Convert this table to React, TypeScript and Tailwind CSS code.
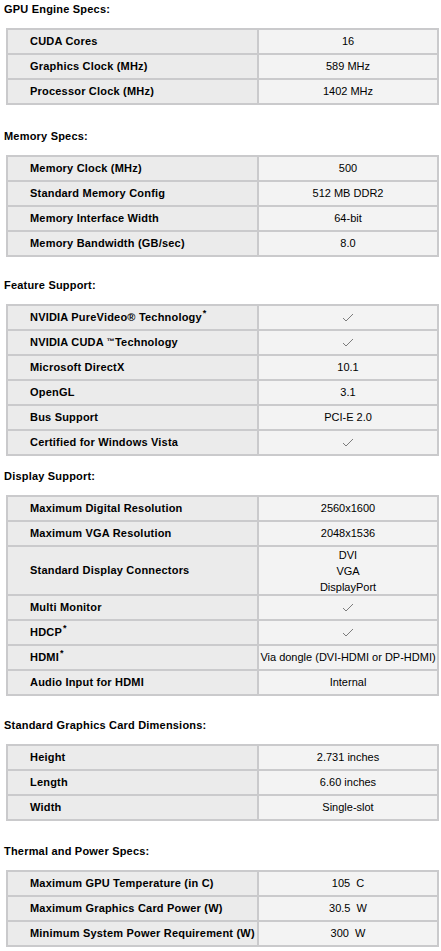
type Row = {
  label: React.ReactNode;
  value: React.ReactNode;
  tall?: boolean;
};

type Section = {
  title: string;
  gap: string;
  rows: Row[];
};

const Check = () => (
  <svg width="12" height="9" viewBox="0 0 12 9" className="block">
    <polyline points="1,5 4,8 11,1" fill="none" stroke="#7c7c7c" strokeWidth="1" />
  </svg>
);

const Star = () => <sup className="text-[9px] font-bold -top-[5px] ml-[1px]">*</sup>;

const sections: Section[] = [
  {
    title: "GPU Engine Specs:",
    gap: "pt-[3px]",
    rows: [
      { label: "CUDA Cores", value: "16" },
      { label: "Graphics Clock (MHz)", value: "589 MHz" },
      { label: "Processor Clock (MHz)", value: "1402 MHz" },
    ],
  },
  {
    title: "Memory Specs:",
    gap: "mt-[25px]",
    rows: [
      { label: "Memory Clock (MHz)", value: "500" },
      { label: "Standard Memory Config", value: "512 MB DDR2" },
      { label: "Memory Interface Width", value: "64-bit" },
      { label: "Memory Bandwidth (GB/sec)", value: "8.0" },
    ],
  },
  {
    title: "Feature Support:",
    gap: "mt-[22px]",
    rows: [
      {
        label: (
          <>
            NVIDIA PureVideo® Technology
            <Star />
          </>
        ),
        value: <Check />,
      },
      {
        label: (
          <>
            NVIDIA CUDA <span className="text-[8px] relative -top-[2px]">™</span>Technology
          </>
        ),
        value: <Check />,
      },
      { label: "Microsoft DirectX", value: "10.1" },
      { label: "OpenGL", value: "3.1" },
      { label: "Bus Support", value: "PCI-E 2.0" },
      { label: "Certified for Windows Vista", value: <Check /> },
    ],
  },
  {
    title: "Display Support:",
    gap: "mt-[14px]",
    rows: [
      { label: "Maximum Digital Resolution", value: "2560x1600" },
      { label: "Maximum VGA Resolution", value: "2048x1536" },
      {
        label: "Standard Display Connectors",
        tall: true,
        value: (
          <div className="flex flex-col items-center leading-[16px]">
            <span>DVI</span>
            <span>VGA</span>
            <span>DisplayPort</span>
          </div>
        ),
      },
      { label: "Multi Monitor", value: <Check /> },
      {
        label: (
          <>
            HDCP
            <Star />
          </>
        ),
        value: <Check />,
      },
      {
        label: (
          <>
            HDMI
            <Star />
          </>
        ),
        value: "Via dongle (DVI-HDMI or DP-HDMI)",
      },
      { label: "Audio Input for HDMI", value: "Internal" },
    ],
  },
  {
    title: "Standard Graphics Card Dimensions:",
    gap: "mt-[23px]",
    rows: [
      { label: "Height", value: "2.731 inches" },
      { label: "Length", value: "6.60 inches" },
      { label: "Width", value: "Single-slot" },
    ],
  },
  {
    title: "Thermal and Power Specs:",
    gap: "mt-[24px]",
    rows: [
      { label: "Maximum GPU Temperature (in C)", value: "105\u00a0 C" },
      { label: "Maximum Graphics Card Power (W)", value: "30.5\u00a0 W" },
      { label: "Minimum System Power Requirement (W)", value: "300\u00a0 W" },
    ],
  },
];

const SpecTable = ({ rows }: { rows: Row[] }) => (
  <div className="ml-[6px] w-[433px] grid grid-cols-[249px_178px] gap-[2px] p-[2px] bg-[#cacacc]">
    {rows.map((row, i) => (
      <div key={i} className="contents">
        <div
          className={`flex items-center pl-[22px] bg-[#ebebeb] font-bold tracking-[0.2px] whitespace-nowrap ${
            row.tall ? "h-[47px]" : "h-[23px]"
          }`}
        >
          <span>{row.label}</span>
        </div>
        <div
          className={`flex items-center justify-center bg-[#f3f3f3] whitespace-nowrap ${
            row.tall ? "h-[47px]" : "h-[23px]"
          }`}
        >
          {row.value}
        </div>
      </div>
    ))}
  </div>
);

export default function App() {
  return (
    <div className="w-[441px] min-h-[951px] bg-white text-black text-[11px] leading-[13px] font-['Liberation_Sans',Arial,sans-serif]">
      {sections.map((s) => (
        <div key={s.title} className={s.gap}>
          <h2 className="ml-[4px] mb-[12px] font-bold text-[11px] leading-[13px] tracking-[0.2px]">
            {s.title}
          </h2>
          <SpecTable rows={s.rows} />
        </div>
      ))}
    </div>
  );
}
